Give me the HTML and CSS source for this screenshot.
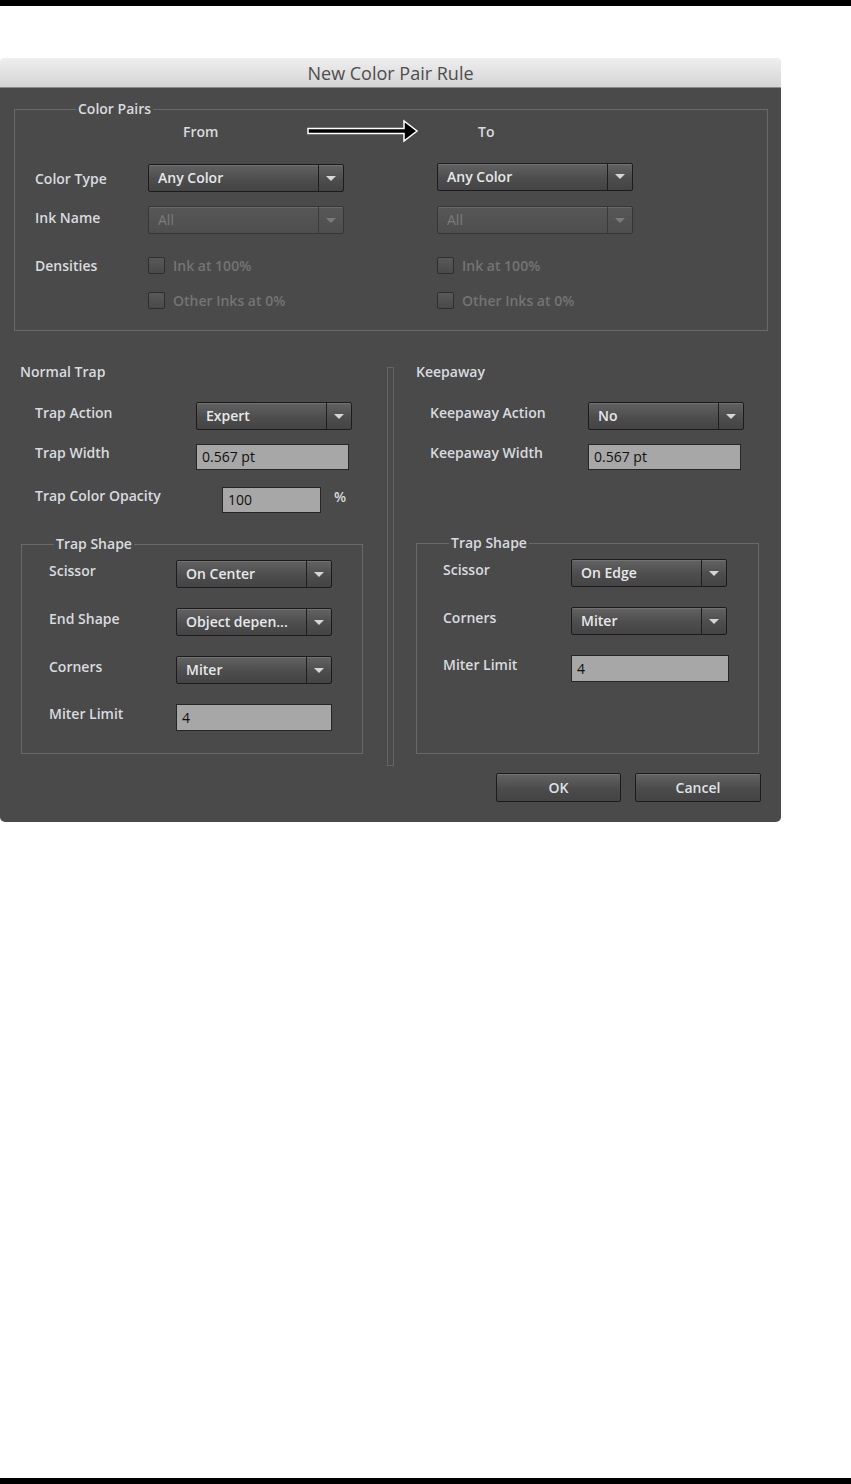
FILE: index.html
```html
<!DOCTYPE html>
<html lang="en">
<head>
    <meta charset="UTF-8">
    <meta name="viewport" content="width=device-width, initial-scale=1.0">
    <title>New Color Pair Rule</title>
    <link rel="stylesheet" href="styles.css">
</head>
<body>

    <div class="topbar"></div>

    <div class="stage">
        <div class="dialog">
            <div class="titlebar">New Color Pair Rule</div>

            <div class="dialog-body">

                <!-- Color Pairs -->
                <fieldset class="group color-pairs">
                    <legend>Color Pairs</legend>

                    <div class="cp-row cp-head">
                        <span></span>
                        <div class="from-cell">
                            <span class="from">From</span>
                            <svg class="arrow" width="112" height="24" viewBox="0 0 112 24">
                                <polygon points="1,9.5 97,9.5 97,2 110,12 97,22 97,14.5 1,14.5" fill="#000" stroke="#fff" stroke-width="1.5" stroke-linejoin="miter"/>
                            </svg>
                        </div>
                        <span class="to">To</span>
                    </div>

                    <div class="cp-row row-type">
                        <span class="label">Color Type</span>
                        <div class="select w196"><span class="value">Any Color</span><span class="caret"></span></div>
                        <div class="select w196 lift"><span class="value">Any Color</span><span class="caret"></span></div>
                    </div>

                    <div class="cp-row row-ink">
                        <span class="label up">Ink Name</span>
                        <div class="select w196 disabled"><span class="value">All</span><span class="caret"></span></div>
                        <div class="select w196 disabled"><span class="value">All</span><span class="caret"></span></div>
                    </div>

                    <div class="cp-row row-dens">
                        <span class="label">Densities</span>
                        <label class="check"><span class="box"></span>Ink at 100%</label>
                        <label class="check"><span class="box"></span>Ink at 100%</label>
                    </div>

                    <div class="cp-row row-other">
                        <span></span>
                        <label class="check"><span class="box"></span>Other Inks at 0%</label>
                        <label class="check"><span class="box"></span>Other Inks at 0%</label>
                    </div>
                </fieldset>

                <!-- Normal Trap / Keepaway -->
                <div class="trap-section">

                    <div class="trap-col left">
                        <div class="heading">Normal Trap</div>

                        <div class="field-row r-action">
                            <span class="label">Trap Action</span>
                            <div class="select w156"><span class="value">Expert</span><span class="caret"></span></div>
                        </div>
                        <div class="field-row r-width">
                            <span class="label">Trap Width</span>
                            <div class="input w153">0.567 pt</div>
                        </div>
                        <div class="field-row r-opacity">
                            <span class="label">Trap Color Opacity</span>
                            <div class="input w99 shift">100</div>
                            <span class="label unit">%</span>
                        </div>

                        <fieldset class="group shape">
                            <legend>Trap Shape</legend>
                            <div class="shape-row">
                                <span class="label">Scissor</span>
                                <div class="select w156"><span class="value">On Center</span><span class="caret"></span></div>
                            </div>
                            <div class="shape-row">
                                <span class="label">End Shape</span>
                                <div class="select w156"><span class="value">Object depen...</span><span class="caret"></span></div>
                            </div>
                            <div class="shape-row">
                                <span class="label">Corners</span>
                                <div class="select w156"><span class="value">Miter</span><span class="caret"></span></div>
                            </div>
                            <div class="shape-row">
                                <span class="label">Miter Limit</span>
                                <div class="input w156 tall">4</div>
                            </div>
                        </fieldset>
                    </div>

                    <div class="divider"></div>

                    <div class="trap-col right">
                        <div class="heading">Keepaway</div>

                        <div class="field-row r-action">
                            <span class="label">Keepaway Action</span>
                            <div class="select w156"><span class="value">No</span><span class="caret"></span></div>
                        </div>
                        <div class="field-row r-width">
                            <span class="label">Keepaway Width</span>
                            <div class="input w153">0.567 pt</div>
                        </div>

                        <fieldset class="group shape">
                            <legend>Trap Shape</legend>
                            <div class="shape-row">
                                <span class="label">Scissor</span>
                                <div class="select w156"><span class="value">On Edge</span><span class="caret"></span></div>
                            </div>
                            <div class="shape-row">
                                <span class="label">Corners</span>
                                <div class="select w156"><span class="value">Miter</span><span class="caret"></span></div>
                            </div>
                            <div class="shape-row">
                                <span class="label">Miter Limit</span>
                                <div class="input w158 tall">4</div>
                            </div>
                        </fieldset>
                    </div>
                </div>

                <div class="buttons">
                    <button class="btn ok">OK</button>
                    <button class="btn cancel">Cancel</button>
                </div>

            </div>
        </div>
    </div>

    <div class="bottombar"></div>

</body>
</html>
```

FILE: styles.css
```css
body {
    margin: 0;
    height: 1484px;
    background-color: #fff;
    font-family: "Open Sans", "Liberation Sans", sans-serif;
    display: flex;
    flex-direction: column;
}

.topbar,
.bottombar {
    height: 6px;
    background-color: #000;
}

.stage {
    flex: 1;
    padding-top: 52px;
}

/* dialog window */
.dialog {
    width: 781px;
}

.titlebar {
    height: 30px;
    line-height: 30px;
    text-align: center;
    font-size: 18px;
    color: #4d4d4d;
    background: linear-gradient(#efefef, #d4d4d4);
    border-radius: 4px 4px 0 0;
    box-sizing: border-box;
    border-bottom: 1px solid #8a8a8a;
}

.dialog-body {
    background-color: #4a4a4a;
    padding: 12px 0 20px;
    border-radius: 0 0 5px 5px;
}

.label {
    font-size: 14px;
    font-weight: 600;
    color: #d8dbdf;
    white-space: nowrap;
}

.label.up {
    margin-bottom: 6px;
}

/* group boxes */
.group {
    margin: 0;
    padding: 0;
    min-width: 0;
    border: 1px solid #696969;
}

.group legend {
    padding: 0 2px;
    line-height: 18px;
    font-size: 14px;
    font-weight: 600;
    color: #d8dbdf;
}

.color-pairs {
    margin-left: 14px;
    width: 754px;
    box-sizing: border-box;
    padding-bottom: 20px;
}

.color-pairs legend {
    margin-left: 61px;
}

.cp-row {
    display: grid;
    grid-template-columns: 113px 289px 196px;
    align-items: center;
    padding-left: 20px;
}

.cp-head {
    height: 24px;
    margin-top: 1px;
}

.from-cell {
    display: flex;
    align-items: center;
}

.from,
.to {
    font-size: 14px;
    font-weight: 600;
    color: #d8dbdf;
}

.from {
    margin-left: 35px;
}

.arrow {
    margin-left: 89px;
    display: block;
}

.to {
    margin-left: 41px;
}

.row-type {
    margin-top: 21px;
}

.row-ink {
    margin-top: 14px;
}

.row-dens {
    margin-top: 22px;
}

.row-other {
    margin-top: 16px;
}

/* dropdowns */
.select {
    display: flex;
    height: 28px;
    box-sizing: border-box;
    border: 1px solid #1c1c1c;
    border-radius: 2px;
    background: linear-gradient(#626262, #4d4d4d 55%, #444);
    box-shadow: inset 0 1px 0 rgba(255, 255, 255, 0.1);
}

.select .value {
    flex: 1;
    padding-left: 9px;
    line-height: 26px;
    font-size: 14px;
    font-weight: 600;
    color: #e6e8ea;
    white-space: nowrap;
    overflow: hidden;
}

.select .caret {
    width: 24px;
    border-left: 1px solid #1e1e1e;
    display: flex;
    align-items: center;
    justify-content: center;
}

.select .caret::after {
    content: "";
    border-top: 5px solid #d6d6d6;
    border-left: 5px solid transparent;
    border-right: 5px solid transparent;
}

.select.disabled {
    border-color: #363636;
    background: linear-gradient(#575757, #4e4e4e);
}

.select.disabled .value {
    color: #7c7c7c;
    font-weight: 400;
}

.select.disabled .caret {
    border-left-color: #3a3a3a;
}

.select.disabled .caret::after {
    border-top-color: #7a7a7a;
}

.lift {
    margin-top: -3px;
}

.w196 { width: 196px; }
.w156 { width: 156px; }
.w153 { width: 153px; }
.w158 { width: 158px; }
.w99 { width: 99px; }

/* text fields */
.input {
    height: 26px;
    box-sizing: border-box;
    border: 1px solid #262626;
    background-color: #a7a7a7;
    color: #111;
    font-size: 14px;
    line-height: 24px;
    padding-left: 5px;
}

.input.tall {
    height: 27px;
    line-height: 25px;
}

/* checkboxes */
.check {
    display: flex;
    align-items: center;
    gap: 8px;
    font-size: 14px;
    font-weight: 600;
    color: #747474;
}

.check .box {
    width: 17px;
    height: 17px;
    box-sizing: border-box;
    border: 1px solid #2e2e2e;
    border-radius: 2px;
    background: linear-gradient(#585858, #4a4a4a);
}

/* trap columns */
.trap-section {
    display: flex;
    margin-top: 32px;
}

.trap-col {
    display: flex;
    flex-direction: column;
}

.trap-col.left {
    width: 387px;
}

.trap-col.right {
    width: 387px;
}

.heading {
    line-height: 18px;
    font-size: 14px;
    font-weight: 600;
    color: #d8dbdf;
}

.left .heading {
    padding-left: 20px;
}

.right .heading {
    padding-left: 22px;
}

.field-row {
    display: flex;
    align-items: center;
}

.field-row .label:first-child,
.shape-row .label {
    margin-bottom: 8px;
}

.left .field-row {
    padding-left: 35px;
}

.left .field-row .label:first-child {
    width: 161px;
}

.right .field-row {
    padding-left: 36px;
}

.right .field-row .label:first-child {
    width: 158px;
}

.r-action {
    margin-top: 21px;
}

.r-width {
    margin-top: 13px;
}

.r-opacity {
    margin-top: 16px;
}

.input.shift {
    margin-left: 26px;
}

.unit {
    margin-left: 13px;
    margin-bottom: 6px;
}

.divider {
    width: 7px;
    height: 399px;
    margin-top: 4px;
    box-sizing: border-box;
    border: 1px solid #656565;
}

.shape {
    display: flex;
    flex-direction: column;
    gap: 20px;
    padding-top: 7px;
    padding-bottom: 22px;
    margin-bottom: 12px;
}

.left .shape {
    margin-left: 21px;
    margin-top: 22px;
    width: 342px;
    box-sizing: border-box;
}

.right .shape {
    margin-left: 22px;
    margin-top: 64px;
    width: 343px;
    box-sizing: border-box;
    flex: 1;
}

.shape legend {
    margin-left: 32px;
}

.shape-row {
    display: flex;
    align-items: center;
}

.left .shape-row {
    padding-left: 27px;
}

.left .shape-row .label {
    width: 127px;
}

.right .shape-row {
    padding-left: 26px;
}

.right .shape-row .label {
    width: 128px;
}

/* buttons */
.buttons {
    display: flex;
    justify-content: flex-end;
    gap: 14px;
    padding-right: 20px;
    margin-top: 7px;
}

.btn {
    height: 29px;
    border: 1px solid #1c1c1c;
    border-radius: 2px;
    background: linear-gradient(#636363, #4b4b4b 55%, #444);
    box-shadow: inset 0 1px 0 rgba(255, 255, 255, 0.1);
    font-family: "Open Sans", "Liberation Sans", sans-serif;
    font-size: 14px;
    font-weight: 600;
    color: #dfe2e5;
    padding: 0;
}

.btn.ok {
    width: 125px;
}

.btn.cancel {
    width: 126px;
}
```
